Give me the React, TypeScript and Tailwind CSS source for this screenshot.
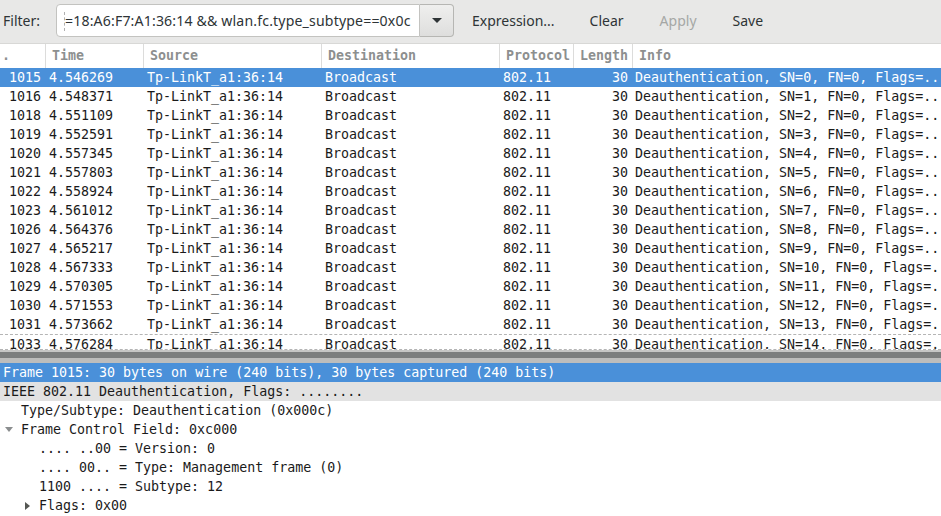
const mono = { fontFamily: '"DejaVu Sans Mono", monospace' };

const packets: [string, string, number][] = [
  ["1015", "4.546269", 0],
  ["1016", "4.548371", 1],
  ["1018", "4.551109", 2],
  ["1019", "4.552591", 3],
  ["1020", "4.557345", 4],
  ["1021", "4.557803", 5],
  ["1022", "4.558924", 6],
  ["1023", "4.561012", 7],
  ["1026", "4.564376", 8],
  ["1027", "4.565217", 9],
  ["1028", "4.567333", 10],
  ["1029", "4.570305", 11],
  ["1030", "4.571553", 12],
  ["1031", "4.573662", 13],
  ["1033", "4.576284", 14],
];

const Expanded = () => (
  <svg width="8" height="5" viewBox="0 0 8 5" className="shrink-0">
    <path d="M0 0 H8 L4 5 Z" fill="#8b8e8f" />
  </svg>
);

const Collapsed = () => (
  <svg width="5" height="8" viewBox="0 0 5 8" className="shrink-0">
    <path d="M0 0 V8 L5 4 Z" fill="#555753" />
  </svg>
);

const App = () => {
  return (
    <div className="w-[941px] h-[516px] overflow-hidden bg-white text-[#2e3436] flex flex-col" style={{ fontFamily: '"Noto Sans", sans-serif' }}>
      {/* Filter toolbar */}
      <div className="h-[43px] shrink-0 bg-[#e8e8e7] flex items-center text-[14px] pb-[2px]">
        <span className="pl-[3px] w-[56px] text-[#2e3436]">Filter:</span>
        <div className="h-[33px] w-[364px] bg-white border border-[#c3c3c0] rounded-l-[4px] flex items-center overflow-hidden relative">
          <div className="absolute left-[7px] top-[7px] h-[19px] border-l border-dashed border-[#b0b0b0]" />
          <span className="pl-[8px] whitespace-nowrap text-[14.1px] tracking-[0.16px]">=18:A6:F7:A1:36:14 &amp;&amp; wlan.fc.type_subtype==0x0c</span>
        </div>
        <div className="h-[33px] w-[34px] border border-l-0 border-[#b6b6b3] rounded-r-[4px] bg-gradient-to-b from-[#efefee] to-[#dededd] flex items-center justify-center">
          <svg width="10" height="5" viewBox="0 0 10 5">
            <path d="M0 0 H10 L5 5 Z" fill="#2e3436" />
          </svg>
        </div>
        <span className="ml-[18px]">Expression...</span>
        <span className="ml-[35px]">Clear</span>
        <span className="ml-[36px] text-[#a5a7a5]">Apply</span>
        <span className="ml-[36px]">Save</span>
      </div>

      {/* Packet list */}
      <div className="h-[306px] shrink-0 overflow-hidden border-t border-[#d8d8d6] text-[13.3px]" style={mono}>
        <div className="h-[24px] flex items-center font-bold text-[#8d8f8f] whitespace-nowrap">
          <div className="w-[45px] pl-[2px]">.</div>
          <div className="w-[98px] h-full flex items-center border-l border-[#dcdcdb] pl-[6px]">Time</div>
          <div className="w-[178px] h-full flex items-center border-l border-[#dcdcdb] pl-[6px]">Source</div>
          <div className="w-[178px] h-full flex items-center border-l border-[#dcdcdb] pl-[6px]">Destination</div>
          <div className="w-[74px] h-full flex items-center border-l border-[#dcdcdb] pl-[6px]">Protocol</div>
          <div className="w-[59px] h-full flex items-center border-l border-[#dcdcdb] pl-[6px]">Length</div>
          <div className="flex-1 h-full flex items-center border-l border-[#dcdcdb] pl-[6px]">Info</div>
        </div>
        {packets.map(([no, time, sn], i) => {
          const selected = i === 0;
          const focused = i === packets.length - 1;
          return (
            <div
              key={no}
              className={`h-[19px] leading-[19px] flex whitespace-nowrap ${selected ? "bg-[#4a90d9] text-white" : "text-[#1a1a1a]"} ${focused ? "border-t border-dashed border-[#b5b5b5] leading-[17px]" : ""}`}
            >
              <div className="w-[45px] text-right pr-[4px]">{no}</div>
              <div className="w-[98px] pl-[4px]">{time}</div>
              <div className="w-[178px] pl-[4px]">Tp-LinkT_a1:36:14</div>
              <div className="w-[178px] pl-[4px]">Broadcast</div>
              <div className="w-[74px] pl-[4px]">802.11</div>
              <div className="w-[59px] text-right pr-[4px]">30</div>
              <div className="flex-1 pl-[3px] overflow-hidden">Deauthentication, SN={sn}, FN=0, Flags=........</div>
            </div>
          );
        })}
      </div>

      {/* Pane splitter */}
      <div className="shrink-0 border-t border-dashed border-[#b5b5b5]" />
      <div className="h-[2px] shrink-0 bg-[#c6c6c5]" />
      <div className="h-[6px] shrink-0 bg-[#7c7e7e]" />
      <div className="h-[5px] shrink-0 bg-[#bdbdbc]" />

      {/* Packet details */}
      <div className="flex-1 text-[13.3px] leading-[19px] whitespace-nowrap text-[#1a1a1a]" style={mono}>
        <div className="h-[19px] bg-[#4a90d9] text-white pl-[3px]">Frame 1015: 30 bytes on wire (240 bits), 30 bytes captured (240 bits)</div>
        <div className="h-[19px] bg-[#e2e2e2] pl-[3px]">IEEE 802.11 Deauthentication, Flags: ........</div>
        <div className="h-[19px] pl-[21px]">Type/Subtype: Deauthentication (0x000c)</div>
        <div className="h-[19px] flex items-center pl-[5px] gap-[8px]">
          <Expanded />
          <span>Frame Control Field: 0xc000</span>
        </div>
        <div className="h-[19px] pl-[39px]">.... ..00 = Version: 0</div>
        <div className="h-[19px] pl-[39px]">.... 00.. = Type: Management frame (0)</div>
        <div className="h-[19px] pl-[39px]">1100 .... = Subtype: 12</div>
        <div className="h-[19px] flex items-center pl-[25px] gap-[9px]">
          <Collapsed />
          <span>Flags: 0x00</span>
        </div>
      </div>
    </div>
  );
};

export default App;
